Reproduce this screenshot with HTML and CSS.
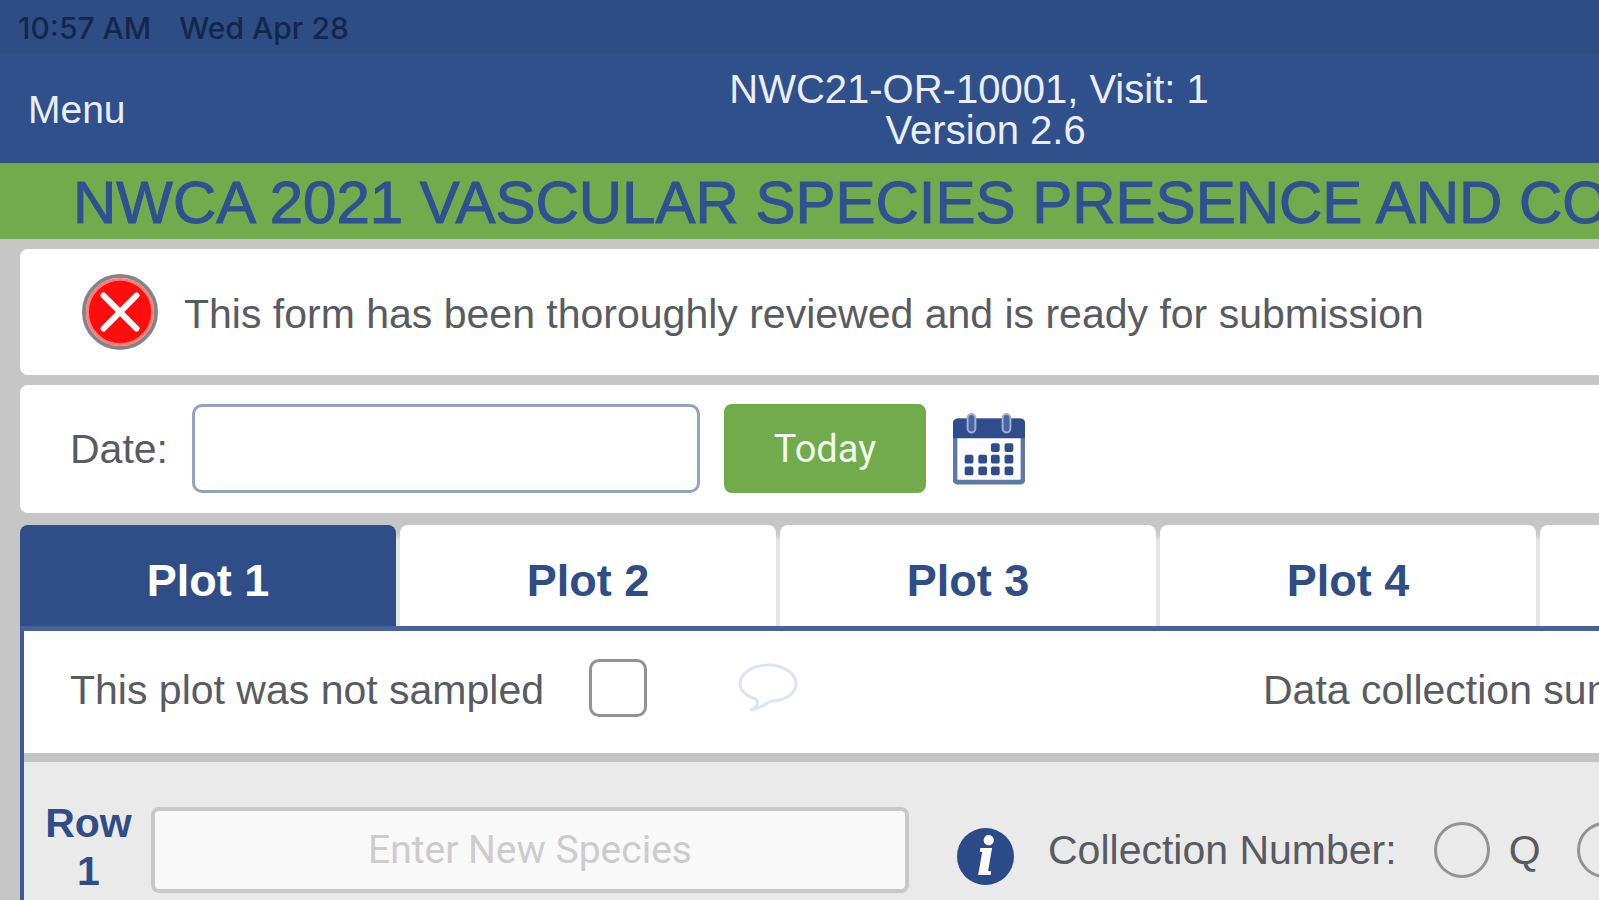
FILE: index.html
```html
<!DOCTYPE html>
<html lang="en">
<head>
    <meta charset="UTF-8">
    <meta name="viewport" content="width=device-width, initial-scale=1.0">
    <title>NWCA 2021 Vascular Species Presence and Cover</title>
    <link rel="stylesheet" href="styles.css">
</head>
<body>
    <div class="status-bar">
        <span>10:57 AM</span>
        <span>Wed Apr 28</span>
    </div>
    <header class="top-bar">
        <button type="button" class="menu-button">Menu</button>
        <div class="site-info">NWC21-OR-10001, Visit: 1<br>&nbsp;&nbsp;&nbsp;Version 2.6</div>
    </header>
    <h1 class="form-title">NWCA 2021 VASCULAR SPECIES PRESENCE AND COVER</h1>

    <main class="content">
        <section class="card review">
            <button type="button" class="icon-button" aria-label="Not reviewed">
                <svg width="76" height="76" viewBox="0 0 78 78">
                    <circle cx="39" cy="39" r="37" fill="#fff" stroke="#858585" stroke-width="4"/>
                    <circle cx="39" cy="39" r="35" fill="#ff7a7a"/>
                    <circle cx="39" cy="39" r="32" fill="#fd0d0d"/>
                    <path d="M22 22L56 56M56 22L22 56" stroke="#fff" stroke-width="6" stroke-linecap="round"/>
                </svg>
            </button>
            <span class="text">This form has been thoroughly reviewed and is ready for submission</span>
        </section>

        <section class="card date-row">
            <label for="visitDate">Date:</label>
            <input type="text" id="visitDate" class="date-input">
            <button type="button" class="today-button">Today</button>
            <button type="button" class="icon-button calendar-button" aria-label="Open calendar">
                <svg width="72" height="72" viewBox="0 0 74 74">
                    <rect x="2" y="8" width="70" height="63" rx="3" fill="#fff" stroke="#6077aa" stroke-width="5"/>
                    <path d="M0 26V11Q0 6 5 6H69Q74 6 74 11V26Z" fill="#2f4d8c"/>
                    <g fill="#4a66a0" stroke="#a3b1d3" stroke-width="2">
                        <rect x="15" y="1" width="8" height="19" rx="4"/>
                        <rect x="51" y="1" width="8" height="19" rx="4"/>
                    </g>
                    <g fill="#2f4d8c">
                        <rect x="39" y="31" width="9" height="9" rx="2"/>
                        <rect x="53" y="31" width="9" height="9" rx="2"/>
                        <rect x="12" y="43" width="9" height="9" rx="2"/>
                        <rect x="26" y="43" width="9" height="9" rx="2"/>
                        <rect x="39" y="43" width="9" height="9" rx="2"/>
                        <rect x="53" y="43" width="9" height="9" rx="2"/>
                        <rect x="12" y="55" width="9" height="9" rx="2"/>
                        <rect x="26" y="55" width="9" height="9" rx="2"/>
                        <rect x="39" y="55" width="9" height="9" rx="2"/>
                        <rect x="53" y="55" width="9" height="9" rx="2"/>
                    </g>
                </svg>
            </button>
        </section>

        <nav class="tabs">
            <button type="button" class="tab active">Plot 1</button>
            <button type="button" class="tab">Plot 2</button>
            <button type="button" class="tab">Plot 3</button>
            <button type="button" class="tab">Plot 4</button>
            <button type="button" class="tab" aria-label="Plot 5"></button>
        </nav>

        <section class="panel">
            <div class="sample-row">
                <label for="notSampled" class="text">This plot was not sampled</label>
                <input type="checkbox" id="notSampled" class="checkbox">
                <button type="button" class="icon-button comment-button" aria-label="Add comment">
                    <svg width="60" height="50" viewBox="0 0 60 50" fill="none" stroke="#dfe3f8" stroke-width="3" stroke-linejoin="round">
                        <path d="M13 47C18 45 21 41 18 36C8 33 2 27 2 21C2 10 15 2 30 2C45 2 58 10 58 21C58 31 46 38 33 38C27 41 21 46 13 47Z"/>
                    </svg>
                </button>
                <span class="text">Data collection summary</span>
            </div>
            <div class="species-row">
                <div class="row-label">Row<br>1</div>
                <input type="text" class="species-input" placeholder="Enter New Species" aria-label="Species name">
                <button type="button" class="info-button" aria-label="Species information">i</button>
                <span class="collection-label">Collection Number:</span>
                <input type="radio" name="collection" id="collectionQ" class="radio">
                <label for="collectionQ" class="radio-label">Q</label>
                <input type="radio" name="collection" class="radio" aria-label="Other collection">
            </div>
        </section>
    </main>
</body>
</html>
```

FILE: styles.css
```css
* {
    box-sizing: border-box;
}
body {
    display: flex;
    flex-direction: column;
    height: 100vh;
    margin: 0;
    overflow: hidden;
    background-color: #c6c6c6;
    color: #585b61;
    font-family: "Liberation Sans", Arial, sans-serif;
    font-size: 41px;
    line-height: 48px;
    white-space: nowrap;
}
button,
input {
    margin: 0;
    padding: 0;
    font-family: inherit;
}
button {
    border: none;
    background: none;
    cursor: pointer;
}
.status-bar {
    display: flex;
    gap: 28px;
    padding: 8px 18px 5px;
    background-color: #2f4d85;
    color: #14264a;
    font-family: Inter, sans-serif;
    font-size: 30px;
    font-weight: 500;
    line-height: 40px;
}
.top-bar {
    display: grid;
    grid-template-columns: 339px 1fr;
    align-items: center;
    padding: 16px 0 12px;
    background-color: #30508b;
    color: #e9eefa;
}
.menu-button {
    justify-self: start;
    padding-left: 28px;
    color: inherit;
    font-size: 39px;
}
.site-info {
    font-size: 40px;
    line-height: 41px;
    text-align: center;
}
.form-title {
    margin: 0;
    padding: 3px 0 0 73px;
    overflow: hidden;
    background-color: #71ab4b;
    color: #2f5092;
    font-size: 60px;
    font-weight: normal;
    line-height: 73px;
    -webkit-text-stroke: 1px #2f5092;
}
.content {
    display: flex;
    flex: 1;
    flex-direction: column;
    padding: 10px 0 0 20px;
    overflow: hidden;
}
.card {
    display: flex;
    align-items: center;
    border-radius: 8px 0 0 8px;
    background-color: #fff;
}
.text {
    padding-top: 4px;
}
.icon-button {
    display: flex;
}
.review {
    gap: 26px;
    margin-bottom: 10px;
    padding: 25px 62px;
}
.date-row {
    margin-bottom: 12px;
    padding: 19px 50px 20px;
}
.date-input {
    width: 508px;
    height: 89px;
    margin: 0 24px;
    padding: 0 20px;
    border: 3px solid #8fa3c3;
    border-radius: 10px;
    background-color: #fff;
    font-size: 38px;
}
.today-button {
    width: 202px;
    height: 89px;
    margin-right: 27px;
    border-radius: 8px;
    background-color: #71ab4b;
    color: #f3f9ee;
    font-family: Roboto, sans-serif;
    font-size: 38px;
}
.tabs {
    display: grid;
    grid-auto-columns: 376px;
    grid-auto-flow: column;
    gap: 4px;
    background: linear-gradient(#c6c6c6 8px, #e6e6e6 16px);
}
.tab {
    padding: 30px 0 19px;
    border-radius: 8px 8px 0 0;
    background-color: #fff;
    color: #2f4d86;
    font-size: 45px;
    font-weight: bold;
    line-height: 52px;
}
.tab.active {
    background-color: #2f4d86;
    color: #fff;
}
.panel {
    flex: 1;
    border-top: 5px solid #46629b;
    border-left: 4px solid #3d5b96;
    background-color: #eaeaea;
}
.sample-row {
    display: flex;
    align-items: center;
    padding: 28px 0 36px 46px;
    border-bottom: 9px solid #c4c4c4;
    background-color: #fff;
}
.checkbox,
.radio {
    flex: none;
    appearance: none;
    border: 3px solid #929395;
}
.checkbox {
    width: 58px;
    height: 58px;
    margin-left: 45px;
    border-radius: 10px;
}
.comment-button {
    margin: 0 465px 0 91px;
}
.species-row {
    display: flex;
    align-items: center;
    padding-top: 37px;
}
.species-row > * {
    flex: none;
}
.row-label {
    width: 127px;
    padding: 0 0 6px 2px;
    color: #2f4d86;
    font-weight: bold;
    text-align: center;
}
.species-input {
    width: 758px;
    height: 86px;
    border: 4px solid #c8c8c8;
    border-radius: 8px;
    background-color: #f9f9f9;
    font-family: Roboto, sans-serif;
    font-size: 39px;
    text-align: center;
}
.species-input::placeholder {
    color: #ccc;
}
.info-button {
    width: 57px;
    height: 57px;
    margin: 12px 34px 0 48px;
    border-radius: 50%;
    background-color: #2b4a88;
    color: #fff;
    font-family: "Liberation Serif", serif;
    font-size: 54px;
    font-style: italic;
    font-weight: bold;
    line-height: 54px;
    -webkit-text-stroke: 2px #fff;
}
.collection-label {
    margin-right: 37px;
}
.radio {
    width: 56px;
    height: 56px;
    border-radius: 50%;
}
.radio-label {
    margin: 0 36px 0 19px;
}
```
